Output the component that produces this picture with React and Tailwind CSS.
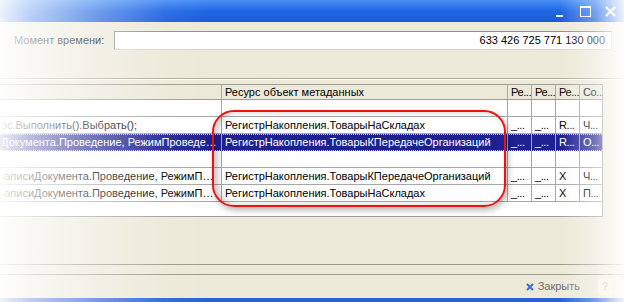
import React from 'react';

const rows = [
  { id: 1, empty: true },
  {
    id: 2,
    ctx: 'Запрос.Выполнить().Выбрать();',
    indent: 'indent-[-27px]',
    res: 'РегистрНакопления.ТоварыНаСкладах',
    a: '_...', b: '_...', c: 'R...', d: 'Ч...',
  },
  {
    id: 3,
    selected: true,
    ctx: 'Записать(РежимЗаписиДокумента.Проведение, РежимПроведенияДокумента.Оперативный)',
    indent: 'indent-[-123px]',
    res: 'РегистрНакопления.ТоварыКПередачеОрганизаций',
    a: '_...', b: '_...', c: 'R...', d: 'О...',
  },
  { id: 4, empty: true },
  {
    id: 5,
    ctx: 'Записать(РежимЗаписиДокумента.Проведение, РежимПроведенияДокумента.Оперативный)',
    indent: 'indent-[-90px]',
    res: 'РегистрНакопления.ТоварыКПередачеОрганизаций',
    a: '_...', b: '_...', c: 'X', d: 'Ч...',
  },
  {
    id: 6,
    ctx: 'Записать(РежимЗаписиДокумента.Проведение, РежимПроведенияДокумента.Оперативный)',
    indent: 'indent-[-90px]',
    res: 'РегистрНакопления.ТоварыНаСкладах',
    a: '_...', b: '_...', c: 'X', d: 'П...',
  },
];

const TitleBar = () => (
  <div className="h-[22px] flex items-center justify-end pr-[8px] gap-[8px] bg-gradient-to-b from-[#4a90f4] via-[#1f66e5] to-[#1a5bd6]">
    <span className="w-[7px] h-[2px] mt-[10px] bg-white" />
    <span className="w-[11px] h-[11px] border border-white border-t-2 ml-[9px]" />
    <svg width="11" height="11" viewBox="0 0 11 11" className="ml-[6px]">
      <path d="M1 1 L10 10 M10 1 L1 10" stroke="white" strokeWidth="2" />
    </svg>
  </div>
);

const Cell = ({ w, children, className = '' }) => (
  <div className={`${w} shrink-0 h-full border-r border-[#a7a7a7] px-[3px] flex items-center overflow-hidden whitespace-nowrap ${className}`}>
    {children}
  </div>
);

// narrow columns on the right
const Small = ({ w = 'w-[24px]', children, className = '' }) => (
  <Cell w={w} className={`px-[2px] tracking-[-0.4px] ${className}`}>{children}</Cell>
);

const Table = () => (
  <div className="w-[603px] h-[133px] bg-white border-y border-r border-[#9d9d9d] flex flex-col">
    <div className="h-[15px] shrink-0 flex bg-[#ece9d8] border-b border-[#9d9d9d] text-black">
      <Cell w="w-[222px]" className="border-[#aca899]" />
      <Cell w="w-[286px]" className="border-[#aca899]">Ресурс объект метаданных</Cell>
      <Small className="border-[#aca899]">Ре...</Small>
      <Small className="border-[#aca899]">Ре...</Small>
      <Small className="border-[#aca899]">Ре...</Small>
      <Small w="w-[23px]" className="border-r-0">Со...</Small>
    </div>
    {rows.map(r => (
      <div
        key={r.id}
        className={`h-[17px] shrink-0 flex border-b ${
          r.selected
            ? 'bg-[#1e2190] text-white border-b-[#dede8a] border-t border-dotted border-t-[#dede8a]'
            : 'text-black border-[#a7a7a7]'
        }`}
      >
        <Cell w="w-[222px]">
          {!r.empty && <span className={`block w-full truncate ${r.indent}`}>{r.ctx}</span>}
        </Cell>
        <Cell w="w-[286px]">{r.res}</Cell>
        <Small>{r.a}</Small>
        <Small>{r.b}</Small>
        <Small>{r.c}</Small>
        <Small w="w-[23px]" className="border-r-0">{r.d}</Small>
      </div>
    ))}
  </div>
);

export default function App() {
  return (
    <div className="relative w-[624px] h-[302px] overflow-hidden bg-[#ece9d8] font-['Liberation_Sans',Arial,sans-serif] text-[11px] leading-none">
      <TitleBar />

      <div className="h-[62px] flex flex-col">
        <div className="flex items-center mt-[9px] h-[19px]">
          <span className="pl-[14px] w-[114px] text-black">Момент времени:</span>
          <div className="w-[498px] h-[19px] bg-white border border-[#8e8f8f] border-r-[#d8d5c8] border-b-[#d8d5c8] flex items-center justify-end pr-[6px] text-black">
            633 426 725 771 130 000
          </div>
        </div>
        <div className="mt-[28px] h-[2px] border-t border-[#aca899] border-b border-b-white" />
      </div>

      <Table />

      <div className="h-[47px]" />
      <div className="h-[10px] border-t border-[#9d9a8c]" />
      <div className="h-[24px] border-t border-[#9d9a8c] flex items-center justify-end pr-[12px] gap-[4px]">
        <svg width="8" height="8" viewBox="0 0 8 8">
          <path d="M1 1 L7 7 M7 1 L1 7" stroke="#3d6fd2" strokeWidth="2" />
        </svg>
        <span className="text-[#707070] mr-[14px]">Закрыть</span>
        <span className="w-[14px] h-[16px] bg-[#f7f4dc] text-[#c9c3a0] font-bold flex items-center justify-center">?</span>
      </div>
      <div className="h-[5px] bg-[#2a5fd8]" />

      {/* fading of the cropped screenshot */}
      <div className="pointer-events-none absolute inset-0 bg-[linear-gradient(to_right,rgba(255,255,255,0.92)_0px,rgba(255,255,255,0.7)_30px,rgba(255,255,255,0.35)_100px,rgba(255,255,255,0.08)_165px,rgba(255,255,255,0)_210px,rgba(255,255,255,0)_560px,rgba(255,255,255,0.38)_595px,rgba(255,255,255,0.75)_614px,rgba(255,255,255,0.92)_624px)]" />

      {/* red highlight */}
      <div className="pointer-events-none absolute left-[212px] top-[110px] w-[294px] h-[97px] rounded-[22px] border-2 border-[#ee1111] shadow-[2px_3px_6px_rgba(0,0,0,0.3),inset_4px_0_6px_rgba(0,0,0,0.22)]" />
    </div>
  );
}
